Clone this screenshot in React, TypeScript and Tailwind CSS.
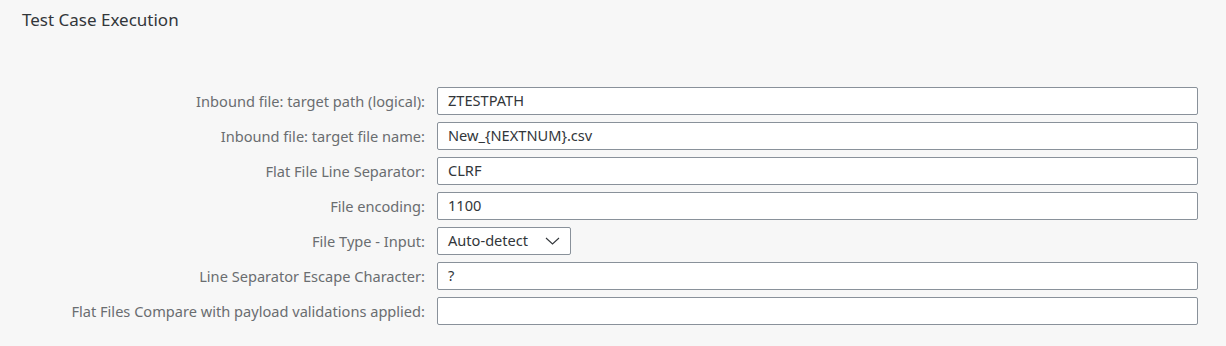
import React from 'react';

const rows: { label: string; value: string; select?: boolean }[] = [
  { label: 'Inbound file: target path (logical):', value: 'ZTESTPATH' },
  { label: 'Inbound file: target file name:', value: 'New_{NEXTNUM}.csv' },
  { label: 'Flat File Line Separator:', value: 'CLRF' },
  { label: 'File encoding:', value: '1100' },
  { label: 'File Type - Input:', value: 'Auto-detect', select: true },
  { label: 'Line Separator Escape Character:', value: '?' },
  { label: 'Flat Files Compare with payload validations applied:', value: '' },
];

function Chevron() {
  return (
    <svg width="15" height="8" viewBox="0 0 15 8" fill="none">
      <path d="M1 1 L7.5 7 L14 1" stroke="#32363a" strokeWidth="1.1" />
    </svg>
  );
}

export default function App() {
  return (
    <div
      className="w-[1226px] h-[346px] bg-[#f7f7f7] text-[#32363a]"
      style={{ fontFamily: '"Noto Sans", "Open Sans", Arial, sans-serif' }}
    >
      <h1 className="pl-[22px] pt-[8px] text-[17px] leading-[24px]">Test Case Execution</h1>

      <div className="mt-[55px] flex flex-col gap-[7px]">
        {rows.map((r) => (
          <div key={r.label} className="flex items-center">
            <div className="w-[425px] text-right text-[14.6px] leading-[20px] text-[#6a6d70]">{r.label}</div>
            <div className="ml-[12px]">
              {r.select ? (
                <div className="w-[134px] h-[28px] bg-white border border-[#89919a] rounded-[2px] flex items-center justify-between pl-[10px] pr-[10px] text-[14.6px]">
                  <span>{r.value}</span>
                  <Chevron />
                </div>
              ) : (
                <div className="w-[761px] h-[28px] bg-white border border-[#89919a] rounded-[2px] flex items-center pl-[10px] text-[14.6px]">
                  {r.value}
                </div>
              )}
            </div>
          </div>
        ))}
      </div>
    </div>
  );
}
